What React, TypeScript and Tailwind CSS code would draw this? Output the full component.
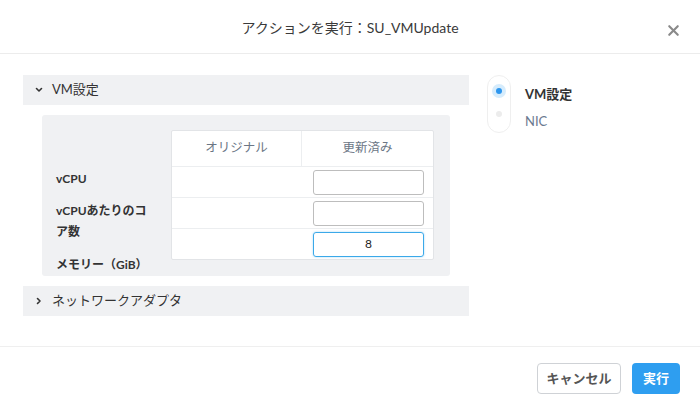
import { X } from 'lucide-react';

const font = { fontFamily: 'Lato, "Noto Sans CJK JP", sans-serif' };

function Chevron({ open }: { open: boolean }) {
    return (
        <svg width="8" height="8" viewBox="0 0 8 8" className="shrink-0">
            {open ? (
                <path d="M1.5 2.5 L4 5 L6.5 2.5" fill="none" stroke="#333" strokeWidth="1.6" strokeLinecap="round" strokeLinejoin="round" />
            ) : (
                <path d="M2.5 1.5 L5 4 L2.5 6.5" fill="none" stroke="#333" strokeWidth="1.6" strokeLinecap="round" strokeLinejoin="round" />
            )}
        </svg>
    );
}

function SectionBar({ label, open }: { label: string; open: boolean }) {
    return (
        <div className="h-[30px] bg-[#f0f1f3] flex items-center gap-[9px] pl-[12px] text-[13px] text-[#333]">
            <Chevron open={open} />
            <span>{label}</span>
        </div>
    );
}

export default function App() {
    const rows = ['', '', '8'];
    return (
        <div style={font} className="w-[700px] h-[410px] bg-white flex flex-col text-[#333]">
            <div className="relative h-[54px] border-b border-[#ececec] flex items-center justify-center shrink-0">
                <h1 className="text-[14px] text-[#3a3a3a] pt-[2px]">アクションを実行：SU_VMUpdate</h1>
                <X className="absolute right-[18px] top-[22px] text-[#8a8a8a]" size={17} strokeWidth={3} />
            </div>

            <div className="flex flex-1 pt-[21px] pl-[23px]">
                <div className="w-[446px] flex flex-col">
                    <SectionBar label="VM設定" open />
                    <div className="mt-[10px] ml-[19px] w-[408px] h-[161px] bg-[#f0f1f3] rounded-[3px] flex pl-[14px] pt-[15px] pr-[16px]">
                        <div className="w-[100px] pt-[38px] text-[12px] font-bold leading-[21px] text-[#333]">
                            <p>vCPU</p>
                            <p className="mt-[11px]">vCPUあたりのコア数</p>
                            <p className="mt-[12px]">メモリー（GiB）</p>
                        </div>
                        <div className="ml-[15px] flex-1 h-[130px] bg-white border border-[#e2e4e7] rounded-[2px] flex flex-col">
                            <div className="h-[36px] flex border-b border-[#eceef0] text-[12.5px] text-[#6b7685]">
                                <div className="w-[130px] border-r border-[#eceef0] flex items-center justify-center">オリジナル</div>
                                <div className="flex-1 flex items-center justify-center">更新済み</div>
                            </div>
                            {rows.map((v, i) => (
                                <div key={i} className={`flex-1 flex items-center justify-end pr-[9px] ${i < 2 ? 'border-b border-[#eceef0]' : ''}`}>
                                    <div className={`w-[111px] h-[25px] rounded-[3px] flex items-center justify-center text-[12px] text-[#222] ${v ? 'border-[1.5px] border-[#3ba9e9] shadow-[0_0_2px_rgba(59,169,233,0.5)]' : 'border border-[#bdbdbd]'}`}>
                                        {v}
                                    </div>
                                </div>
                            ))}
                        </div>
                    </div>
                    <div className="mt-[10px]">
                        <SectionBar label="ネットワークアダプタ" open={false} />
                    </div>
                </div>

                <div className="ml-[18px] flex gap-[14px]">
                    <div className="w-[24px] h-[58px] rounded-full border border-[#efefef] flex flex-col items-center pt-[8px]">
                        <div className="w-[14px] h-[14px] rounded-full bg-[#d6ecfc] flex items-center justify-center">
                            <div className="w-[6px] h-[6px] rounded-full bg-[#2d96ee]" />
                        </div>
                        <div className="mt-[13px] w-[6px] h-[6px] rounded-full bg-[#ececec]" />
                    </div>
                    <div className="flex flex-col text-[13px] pt-[9px]">
                        <span className="font-bold text-[#333] leading-[20px]">VM設定</span>
                        <span className="mt-[7px] text-[#6b7a90] leading-[20px]">NIC</span>
                    </div>
                </div>
            </div>

            <div className="h-[64px] border-t border-[#efefef] flex items-center justify-end gap-[11px] pr-[20px] shrink-0">
                <button className="w-[84px] h-[31px] border border-[#cfd2d6] rounded-[4px] text-[13px] font-bold text-[#555]">キャンセル</button>
                <button className="w-[48px] h-[31px] bg-[#2e9ef0] rounded-[4px] text-[13px] font-bold text-white">実行</button>
            </div>
        </div>
    );
}
